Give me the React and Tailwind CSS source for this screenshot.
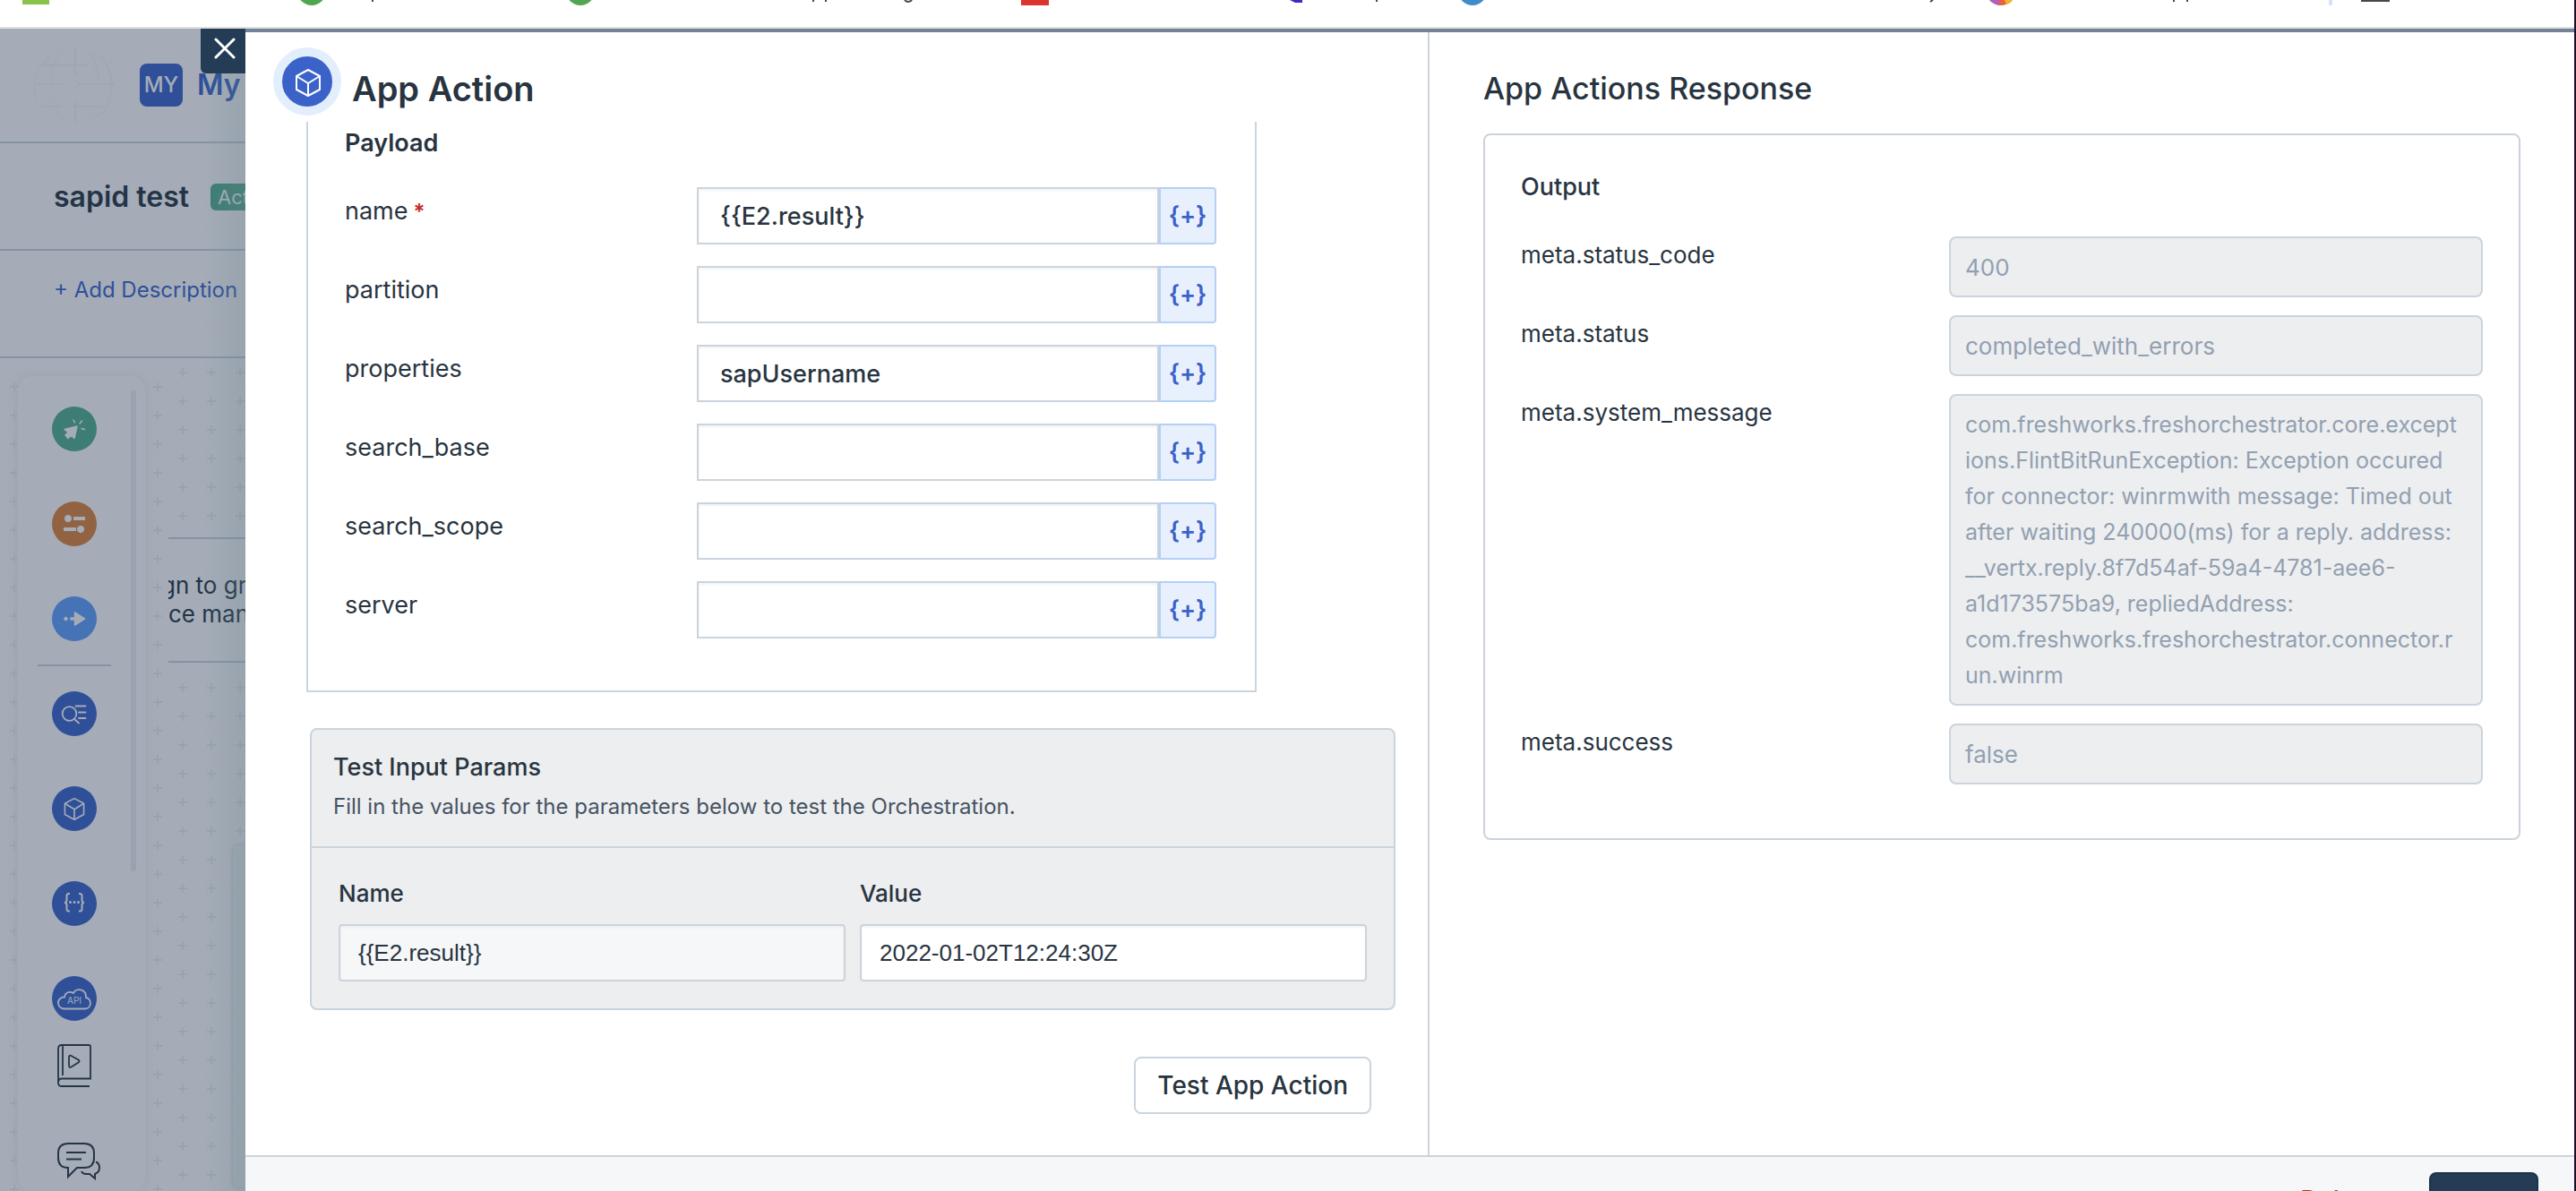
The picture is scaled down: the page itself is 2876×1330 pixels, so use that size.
import React from 'react';

const payloadFields = [
  { id: 'name', value: '{{E2.result}}', required: true },
  { id: 'partition', value: '' },
  { id: 'properties', value: 'sapUsername' },
  { id: 'search_base', value: '' },
  { id: 'search_scope', value: '' },
  { id: 'server', value: '' },
];

const systemMessage = [
  'com.freshworks.freshorchestrator.core.except',
  'ions.FlintBitRunException: Exception occured',
  'for connector: winrmwith message: Timed out',
  'after waiting 240000(ms) for a reply. address:',
  '__vertx.reply.8f7d54af-59a4-4781-aee6-',
  'a1d173575ba9, repliedAddress:',
  'com.freshworks.freshorchestrator.connector.r',
  'un.winrm',
].join('\n');

const outputFields = [
  { id: 'meta.status_code', value: '400' },
  { id: 'meta.status', value: 'completed_with_errors' },
  { id: 'meta.system_message', value: systemMessage, rows: 8 },
  { id: 'meta.success', value: 'false' },
];

function CubeIcon({ className }) {
  return (
    <svg viewBox="0 0 32 32" className={className} fill="none" stroke="currentColor" strokeWidth="2" strokeLinejoin="round">
      <path d="M16 2 L29 9 V24 L16 31 L3 24 V9 Z" />
      <path d="M3 9 L16 17 L29 9 M16 17 V31" />
    </svg>
  );
}

function EventIcon() {
  return (
    <svg viewBox="0 0 50 50" className="size-full" fill="#a5acb8" stroke="#a5acb8">
      <path d="M28 22 L14 25.5 L18 28.5 L15 32 L18 35.5 L21.5 32 L25 35.5 Z" strokeWidth="1.5" strokeLinejoin="round" />
      <path d="M24 15 L25.5 18 M33.5 16 L31 19 M33 24.5 L36.5 25.5" strokeWidth="1.5" strokeLinecap="round" />
    </svg>
  );
}

function ConditionIcon() {
  return (
    <svg viewBox="0 0 50 50" className="size-full" fill="#a5acb8" stroke="#a5acb8">
      <circle cx="18" cy="19" r="3.6" />
      <circle cx="32" cy="31" r="3.6" />
      <path d="M24 19 H37 M13 31 H27" strokeWidth="4" />
    </svg>
  );
}

function ActionIcon() {
  return (
    <svg viewBox="0 0 50 50" className="size-full" fill="#a5acb8" stroke="#a5acb8" strokeLinejoin="round">
      <circle cx="15.5" cy="25" r="2" strokeWidth="0.5" />
      <path d="M21 24 H25.5 V18 L36.5 25 L25.5 32 V26 H21 Z" strokeWidth="1.5" />
    </svg>
  );
}

function SearchListIcon() {
  return (
    <svg viewBox="0 0 50 50" className="size-full" fill="none" stroke="#a5acb8" strokeWidth="1.8" strokeLinecap="round">
      <circle cx="19.5" cy="25" r="7.8" />
      <path d="M25 31 L30 35.5 M26.5 16.5 H37.5 M30 23.5 H37.5 M30 30 H37.5" />
    </svg>
  );
}

function BracesIcon() {
  return (
    <svg viewBox="0 0 50 50" className="size-full" fill="none" stroke="#a5acb8" strokeWidth="2">
      <path d="M20 14 H18.5 Q16.5 14 16.5 16.5 V21 Q16.5 24 14 24 Q16.5 24 16.5 27 V31 Q16.5 33.5 18.5 33.5 H20" />
      <path d="M30 14 H31.5 Q33.5 14 33.5 16.5 V21 Q33.5 24 36 24 Q33.5 24 33.5 27 V31 Q33.5 33.5 31.5 33.5 H30" />
      <path d="M20.5 23.5 h0 M25 23.5 h0 M29.5 23.5 h0" strokeWidth="3" strokeLinecap="round" />
    </svg>
  );
}

function ApiIcon() {
  return (
    <svg viewBox="0 0 50 50" className="size-full" fill="none" stroke="#a5acb8" strokeWidth="1.8">
      <path d="M13 36.5 A6.5 6.5 0 0 1 14 23.5 C14.5 18 20 16.5 24 19 C27 12.5 38.5 14 38 24 C45 25.5 44.5 36.5 37 36.5 Z" />
      <text x="25" y="31" textAnchor="middle" fontSize="10" fill="#a5acb8" stroke="none" fontFamily="Inter, sans-serif">
        API
      </text>
    </svg>
  );
}

function BookIcon() {
  return (
    <svg viewBox="0 0 38 48" className="h-12 w-[38px]" fill="none" stroke="#243447" strokeWidth="1.8">
      <path d="M36 47 H5 Q1 47 1 43 V5 Q1 1 5 1 H35 Q37 1 37 3 V38.5 H5 Q1 38.5 1 43 M6 2 V35" />
      <path d="M13 15 Q13 12 15.5 13 L23.5 17.5 Q25.5 19 23.5 20.5 L15.5 25.5 Q13 27 13 23.5 Z" />
    </svg>
  );
}

function ChatIcon() {
  return (
    <svg viewBox="0 0 48 42" className="h-[42px] w-12" fill="none" stroke="#243447" strokeWidth="2">
      <path d="M12 28 Q1 28 1 17 V12 Q1 1 12 1 H30 Q41 1 41 12 V17 Q41 28 30 28 H22 L12 38 Z" />
      <path d="M10 11 H32 M10 18.5 H27 M27 32 Q28 35 32 35 H36 L42 40 V35 Q47 33 47 28 Q47 23 43 21.5" />
    </svg>
  );
}

function GlobeLogo() {
  return (
    <svg viewBox="0 0 96 88" className="h-[88px] w-24" fill="none" stroke="#98a1ae" strokeWidth="1">
      <g opacity="0.4">
        <path d="M18 12 Q-6 40 6 62 M30 6 Q18 12 14 22 M78 12 Q100 44 78 76 M66 6 Q90 20 88 44 M66 82 Q80 76 84 68" />
        <path d="M34 6 Q18 22 22 44 M62 6 Q76 24 74 44 M26 68 Q30 80 38 84 M60 84 Q70 76 72 68" />
        <path d="M32 62 L74 24 M2 76 L28 54 M86 20 L96 8" />
      </g>
      <path d="M48 2 V34 M48 62 V86 M12 22 H62 M4 43 H34 M52 43 H92 M12 68 H34 M48 68 H80" opacity="0.8" />
    </svg>
  );
}

// Only the lower edge of the bookmarks is in view
function BookmarksBar() {
  return (
    <div className="h-8 shrink-0 overflow-hidden border-b-2 border-[#e0e0e0] bg-white">
      <svg viewBox="0 0 2874 30" className="h-[30px] w-[2874px] max-w-none" aria-hidden="true">
        <rect x="25" width="30" height="5" fill="#8bc34a" />
        <circle cx="348" cy="-10" r="16" fill="#52a651" />
        <circle cx="648" cy="-10" r="16" fill="#52a651" />
        <rect x="1140" width="31" height="6" fill="#dc3530" />
        <path d="M1440 0 H1454 V3 H1446 Z" fill="#4527c4" />
        <circle cx="1644" cy="-10" r="16" fill="#428bca" />
        <circle cx="2234" cy="-10" r="16" fill="#e8603c" />
        <path d="M2221 0 H2232 V6 Q2224 4 2221 0 Z" fill="#b05fc0" />
        <path d="M2238 0 H2247 Q2245 4 2240 5 Z" fill="#f2b233" />
        <rect x="2600" width="4" height="6" fill="#d3e3fd" />
        <rect x="2636" width="32" height="2" fill="#474747" />
        <path d="M416 0 V2 M908 0 V2 M922 0 V2 M1537 0 V2 M2427 0 V2 M2442 0 V2" stroke="#474747" strokeWidth="2" />
        <path d="M1010 0 Q1014 4 1018 0 M2155 2 L2158 0" fill="none" stroke="#474747" strokeWidth="2" />
      </svg>
    </div>
  );
}

function CanvasGrid({ className, id }) {
  return (
    <svg className={className} aria-hidden="true">
      <defs>
        <pattern id={id} width="32" height="32" patternUnits="userSpaceOnUse">
          <path d="M16 11 V21 M11 16 H21" stroke="#99a3af" strokeWidth="2" />
        </pattern>
      </defs>
      <rect width="100%" height="100%" fill={`url(#${id})`} />
    </svg>
  );
}

function PaletteItem({ label, className, children }) {
  return (
    <button type="button" aria-label={label} className={`size-[50px] shrink-0 rounded-full ${className}`}>
      {children}
    </button>
  );
}

function Palette() {
  return (
    <aside className="relative ml-5 mt-5 flex w-[142px] shrink-0 justify-center rounded-2xl bg-[#a5acb8] pr-4 shadow-[0_0_12px_#98a3af]">
      <div className="flex w-[50px] flex-col items-center gap-14 pt-[34px]">
        <PaletteItem label="Event" className="bg-[#3d7d73]"><EventIcon /></PaletteItem>
        <PaletteItem label="Condition" className="bg-[#916343]"><ConditionIcon /></PaletteItem>
        <PaletteItem label="Action" className="bg-[#4573b5]"><ActionIcon /></PaletteItem>
        <PaletteItem label="Reader" className="bg-[#2f5098]"><SearchListIcon /></PaletteItem>
        <PaletteItem label="App" className="flex items-center justify-center bg-[#2f5098] text-[#a5acb8]">
          <CubeIcon className="size-[26px]" />
        </PaletteItem>
        <PaletteItem label="Expression" className="bg-[#2f5098]"><BracesIcon /></PaletteItem>
        <div className="flex flex-col items-center gap-[26px]">
          <PaletteItem label="Web request" className="bg-[#2f5098]"><ApiIcon /></PaletteItem>
          <button type="button" aria-label="Guide"><BookIcon /></button>
          <button type="button" aria-label="Chat" className="ml-[10px] mt-9"><ChatIcon /></button>
        </div>
      </div>
      <div className="absolute left-[22px] top-[322px] h-[2px] w-[82px] bg-[#8592a2]"></div>
      <div className="absolute right-[10px] top-4 h-[537px] w-[6px] rounded-full bg-[#98a3af]"></div>
    </aside>
  );
}

function Workflow() {
  return (
    <div className="relative flex w-[274px] shrink-0 flex-col overflow-hidden bg-[#a5acb8] text-[#243447]">
      <header className="flex h-32 shrink-0 items-center border-b-2 border-[#8592a2] pl-9">
        <GlobeLogo />
        <span className="ml-6 flex size-12 shrink-0 items-center justify-center rounded-lg bg-[#2f5098] text-2xl font-medium text-[#a5acb8]">MY</span>
        <span className="ml-4 whitespace-nowrap text-[32px] font-semibold text-[#2f5098]">My</span>
      </header>
      <div className="flex h-[120px] shrink-0 items-center gap-6 border-b-2 border-[#8592a2] pl-[60px] pt-[2px]">
        <h1 className="whitespace-nowrap text-[32px] font-semibold">sapid test</h1>
        <span className="h-[30px] shrink-0 rounded-md bg-[#3d7d73] px-2 text-[22px] leading-[30px] text-[#a5acb8]">Active</span>
      </div>
      <div className="h-[120px] shrink-0 border-b-2 border-[#8592a2] pl-[60px] pt-6">
        <a href="#description" className="whitespace-nowrap text-2xl leading-10 text-[#2f5098]">+ Add Description</a>
      </div>
      <div className="relative flex min-h-0 flex-1">
        <CanvasGrid id="grid-left" className="absolute left-0 top-4 h-full w-[188px]" />
        <CanvasGrid id="grid-right" className="absolute left-[188px] top-0 h-full w-[86px]" />
        <Palette />
        <div className="relative ml-[26px] flex-1 overflow-hidden">
          <div className="mt-[200px] flex h-[140px] flex-col justify-center whitespace-nowrap border-y-2 border-[#8592a2] bg-[#a5acb8] text-[26px] leading-8">
            <p className="-ml-2">gn to group</p>
            <p>ce management</p>
          </div>
          <div className="ml-[72px] mt-[204px] h-[382px] rounded-l-md bg-[#9fa9b4] shadow-[0_0_4px_#8592a2]"></div>
        </div>
      </div>
      <div className="pointer-events-none absolute inset-y-0 right-0 w-12 bg-linear-to-r from-transparent to-[#6f8a90]/25"></div>
      <button type="button" aria-label="Close" className="absolute right-0 top-0 flex size-[50px] items-center justify-center rounded-bl-md bg-[#243c56] pb-[6px] pl-1">
        <svg viewBox="0 0 24 24" className="size-6" stroke="#fff" strokeWidth="3" strokeLinecap="round">
          <path d="M2 2 L22 22 M22 2 L2 22" />
        </svg>
      </button>
    </div>
  );
}

function PayloadField({ field }) {
  return (
    <div className="flex">
      <label htmlFor={field.id} className="w-[393px] shrink-0 pt-[7px] text-[27px] leading-10">
        {field.id}
        {field.required && <span className="ml-[6px] text-2xl font-semibold text-[#c72a2a]">*</span>}
      </label>
      <input
        id={field.id}
        defaultValue={field.value}
        className="h-16 min-w-0 flex-1 border-2 border-[#cbd4dc] bg-white px-6 text-[27px] font-medium shadow-[inset_0_2px_3px_#f0f3f5]"
      />
      <button
        type="button"
        aria-label={`Insert placeholder in ${field.id}`}
        className="h-16 w-16 rounded-r border-2 border-[#b3d0f7] bg-[#e8f0fe] text-[27px] font-semibold text-[#3b62c8]"
      >
        {'{+}'}
      </button>
    </div>
  );
}

function TestParams() {
  return (
    <section className="ml-[72px] mr-9 mt-10 rounded-lg border-2 border-[#cbd4dc] bg-[#eceef0]">
      <div className="border-b-2 border-[#cbd4dc] px-6 pb-6 pt-[22px]">
        <h3 className="text-[27px] font-medium leading-10">Test Input Params</h3>
        <p className="mt-1 text-2xl leading-10 text-[#475361]">Fill in the values for the parameters below to test the Orchestration.</p>
      </div>
      <div className="flex gap-4 px-[30px] pb-[30px] pt-[31px]">
        <div className="flex flex-1 flex-col gap-[14px]">
          <label htmlFor="param-name" className="text-[26px] font-medium leading-10">Name</label>
          <input
            id="param-name"
            readOnly
            defaultValue="{{E2.result}}"
            className="h-16 w-full rounded border-2 border-[#cbd4dc] bg-[#f5f7f9] px-5 font-[Liberation_Sans,sans-serif] text-[26px] shadow-[inset_0_2px_3px_#ebeef1]"
          />
        </div>
        <div className="flex flex-1 flex-col gap-[14px]">
          <label htmlFor="param-value" className="text-[26px] font-medium leading-10">Value</label>
          <input
            id="param-value"
            defaultValue="2022-01-02T12:24:30Z"
            className="h-16 w-full rounded border-2 border-[#cbd4dc] bg-white px-5 font-[Liberation_Sans,sans-serif] text-[26px] shadow-[inset_0_2px_3px_#f0f3f5]"
          />
        </div>
      </div>
    </section>
  );
}

function OutputField({ field }) {
  const box = 'min-w-0 flex-1 rounded-lg border-2 border-[#cbd4dc] bg-[#eceef0] px-4 leading-10 text-[#93a0b0]';
  return (
    <div className="flex items-start">
      <label htmlFor={field.id} className="w-[478px] shrink-0 pt-px text-[26px] leading-10">{field.id}</label>
      {field.rows ? (
        <textarea
          id={field.id}
          disabled
          rows={field.rows}
          defaultValue={field.value}
          className={`${box} resize-none overflow-hidden whitespace-pre py-3 text-[25px]`}
        />
      ) : (
        <input id={field.id} disabled defaultValue={field.value} className={`${box} h-[68px] text-[26px]`} />
      )}
    </div>
  );
}

function App() {
  return (
    <div className="flex h-screen flex-col overflow-hidden border-r-2 border-[#1f0d2a] bg-white font-[Inter,sans-serif] text-[#283440]">
      <BookmarksBar />
      <div className="flex min-h-0 flex-1">
        <Workflow />
        <main className="flex min-w-0 flex-1 flex-col border-t-4 border-[#748297]">
          <div className="grid min-h-0 flex-1 grid-cols-[33fr_32fr]">
            <section className="min-w-0 overflow-hidden">
              <div className="flex h-[100px] items-center gap-3 pl-[31px] pt-[10px]">
                <span className="flex size-19 shrink-0 items-center justify-center rounded-full border-[10px] border-[#e3eefd] bg-[#3b62c8] text-white">
                  <CubeIcon className="ml-px mt-[2px] size-8" />
                </span>
                <h2 className="pt-4 text-[38px] font-semibold leading-10">App Action</h2>
              </div>
              <div className="ml-[68px] mr-[191px] border-x-2 border-b-2 border-[#cbd4dc] pb-[58px] pl-[41px] pr-[43px] pt-1">
                <h3 className="text-[27px] font-semibold leading-10">Payload</h3>
                <div className="mt-[29px] flex flex-col gap-6">
                  {payloadFields.map((field) => (
                    <PayloadField key={field.id} field={field} />
                  ))}
                </div>
              </div>
              <TestParams />
              <div className="mr-[63px] mt-[52px] flex justify-end">
                <button type="button" className="h-16 rounded-lg border-2 border-[#cbd4dc] bg-white px-6 text-[28px] font-medium">
                  Test App Action
                </button>
              </div>
            </section>
            <section className="min-w-0 border-l-2 border-[#cbd4dc] px-[60px] pt-[39px]">
              <h2 className="text-[34px] font-medium leading-[48px]">App Actions Response</h2>
              <div className="mt-[26px] rounded-lg border-2 border-[#cbd4dc] px-10 pb-[60px] pt-[38px]">
                <h3 className="text-[27px] font-medium leading-10">Output</h3>
                <div className="mt-[35px] flex flex-col gap-5">
                  {outputFields.map((field) => (
                    <OutputField key={field.id} field={field} />
                  ))}
                </div>
              </div>
            </section>
          </div>
          <footer className="flex h-10 shrink-0 items-start justify-end gap-[58px] overflow-hidden border-t-2 border-[#cbd4dc] bg-[#f5f7f9] pr-10 pt-[17px]">
            <button type="button" className="h-16 pb-[3px] text-[28px] font-medium text-[#c72a2a]">Delete</button>
            <button type="button" className="h-16 w-[122px] rounded-lg border-2 border-[#1c324c] bg-[#243c56] text-[28px] font-medium text-white">Save</button>
          </footer>
        </main>
      </div>
    </div>
  );
}

export default App;
